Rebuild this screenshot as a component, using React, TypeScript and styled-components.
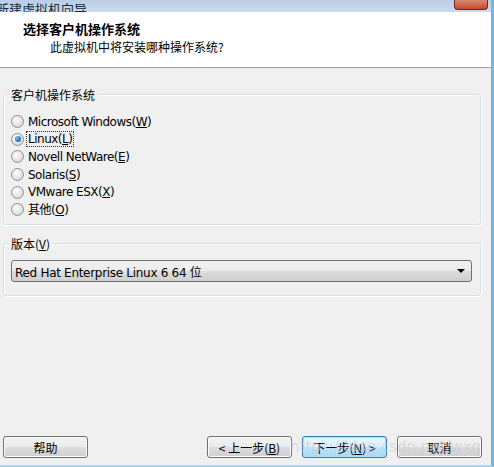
import React from 'react';
import styled, { createGlobalStyle } from 'styled-components';

const GlobalStyle = createGlobalStyle`
	html, body {
		margin: 0;
		padding: 0;
		background: #f0f0f0;
	}
	body {
		font-family: Tahoma, 'DejaVu Sans', 'Noto Sans CJK SC', sans-serif;
		font-size: 12px;
		color: #000;
	}
`;

const osList = [
	{ label: 'Microsoft Windows', key: 'W' },
	{ label: 'Linux', key: 'L' },
	{ label: 'Novell NetWare', key: 'E' },
	{ label: 'Solaris', key: 'S' },
	{ label: 'VMware ESX', key: 'X' },
	{ label: '其他', key: 'O' },
];

const App = () => {
	const selected = 'Linux';

	return (
		<Window>
			<GlobalStyle />
			<TitleBar>
				<TitleText>新建虚拟机向导</TitleText>
				<CloseBtn />
			</TitleBar>
			<Header>
				<HeaderTitle>选择客户机操作系统</HeaderTitle>
				<HeaderSub>此虚拟机中将安装哪种操作系统?</HeaderSub>
			</Header>
			<Body>
				<GroupBox $height={131}>
					<Legend>客户机操作系统</Legend>
					<RadioList>
						{osList.map((os) => (
							<RadioRow key={os.key}>
								<RadioDot $checked={os.label === selected} />
								<RadioLabel $focused={os.label === selected}>
									{os.label}(<u>{os.key}</u>)
								</RadioLabel>
							</RadioRow>
						))}
					</RadioList>
				</GroupBox>
				<GroupBox $height={53}>
					<Legend>
						版本(<u>V</u>)
					</Legend>
					<Select>
						<span>Red Hat Enterprise Linux 6 64 位</span>
						<Arrow />
					</Select>
				</GroupBox>
			</Body>
			<Footer>
				<Button>帮助</Button>
				<Spacer />
				<Button>&lt; 上一步(<u>B</u>)</Button>
				<Button $primary>
					下一步(<u>N</u>) &gt;
				</Button>
				<Button>取消</Button>
				<Watermark>https://blog.csdn.net/wxq</Watermark>
			</Footer>
		</Window>
	);
};

export default App;

const Window = styled.div`
	position: relative;
	width: 494px;
	height: 467px;
	box-sizing: border-box;
	display: flex;
	flex-direction: column;
	background: #f0f0f0;
	border-right: 3px solid #6fb7e4;
	border-bottom: 2px solid #a9d4ef;
	overflow: hidden;
`;

const TitleBar = styled.div`
	height: 12px;
	display: flex;
	align-items: flex-end;
	background: linear-gradient(#b9cde5, #c9dbef);
	overflow: hidden;
`;

const TitleText = styled.div`
	margin-left: -4px;
	font-family: 'Noto Sans CJK SC', sans-serif;
	font-size: 13px;
	line-height: 13px;
	color: #1e2a3a;
	margin-bottom: -3px;
`;

const CloseBtn = styled.div`
	margin-left: auto;
	margin-right: 3px;
	align-self: flex-start;
	width: 32px;
	height: 9px;
	border: 1px solid #6b2a1e;
	border-top: none;
	border-radius: 0 0 4px 4px;
	background: linear-gradient(#d98a72, #c4482c);
`;

const Header = styled.div`
	height: 56px;
	box-sizing: border-box;
	background: #fff;
	border-bottom: 1px solid #a0a0a0;
	padding: 8px 0 0 23px;
	font-family: 'Noto Sans CJK SC', sans-serif;
`;

const HeaderTitle = styled.div`
	font-size: 13px;
	font-weight: bold;
	line-height: 17px;
`;

const HeaderSub = styled.div`
	font-size: 12px;
	line-height: 16px;
	margin-top: 2px;
	padding-left: 27px;
`;

const Body = styled.div`
	flex: 1;
	display: flex;
	flex-direction: column;
	gap: 18px;
	padding: 26px 10px 0 3px;
`;

const GroupBox = styled.div<{ $height: number }>`
	position: relative;
	height: ${(p) => p.$height}px;
	box-sizing: border-box;
	border: 1px solid #d5dfe5;
	border-radius: 3px;
	box-shadow: inset 1px 1px 0 #fff, 1px 1px 0 #fff;
	padding: 16px 8px 0 7px;
`;

const Legend = styled.div`
	position: absolute;
	top: -9px;
	left: 5px;
	padding: 0 2px;
	background: #f0f0f0;
	font-family: 'Noto Sans CJK SC', sans-serif;
	font-size: 12px;
	line-height: 17px;
`;

const RadioList = styled.div`
	display: flex;
	flex-direction: column;
	padding-top: 2px;
`;

const RadioRow = styled.div`
	height: 17.6px;
	display: flex;
	align-items: center;
	gap: 3px;
`;

const RadioDot = styled.span<{ $checked?: boolean }>`
	width: 11px;
	height: 11px;
	border-radius: 50%;
	border: 1px solid #8e8f8f;
	background: radial-gradient(circle at 40% 35%, #ffffff, #dcdcdc 70%);
	position: relative;
	&::after {
		content: '';
		display: ${(p) => (p.$checked ? 'block' : 'none')};
		position: absolute;
		left: 2.5px;
		top: 2.5px;
		width: 6px;
		height: 6px;
		border-radius: 50%;
		background: radial-gradient(circle at 35% 35%, #7ac2ea, #1a5f96 75%);
	}
`;

const RadioLabel = styled.span<{ $focused?: boolean }>`
	font-family: Tahoma, 'DejaVu Sans', 'Noto Sans CJK SC', sans-serif;
	font-size: 12px;
	line-height: 14px;
	padding: 0 1px;
	outline: ${(p) => (p.$focused ? '1px dotted #333' : 'none')};
	letter-spacing: -0.5px;
`;

const Select = styled.div`
	height: 22px;
	box-sizing: border-box;
	margin-top: 0;
	display: flex;
	align-items: center;
	justify-content: space-between;
	padding: 0 6px 0 3px;
	border: 1px solid #707070;
	border-radius: 3px;
	background: linear-gradient(#f2f2f2 0%, #ebebeb 50%, #dddddd 51%, #cfcfcf 100%);
	font-family: Tahoma, 'DejaVu Sans', 'Noto Sans CJK SC', sans-serif;
	font-size: 12px;
	letter-spacing: -0.3px;
`;

const Arrow = styled.span`
	width: 0;
	height: 0;
	border-left: 4px solid transparent;
	border-right: 4px solid transparent;
	border-top: 4px solid #000;
`;

const Footer = styled.div`
	position: relative;
	display: flex;
	gap: 10px;
	padding: 0 9px 7px 3px;
	align-items: center;
`;

const Spacer = styled.div`
	flex: 1;
`;

const Button = styled.div<{ $primary?: boolean }>`
	width: 85px;
	height: 22px;
	box-sizing: border-box;
	display: flex;
	align-items: center;
	justify-content: center;
	border: 1px solid ${(p) => (p.$primary ? '#3c7fb1' : '#707070')};
	border-radius: 3px;
	background: ${(p) =>
		p.$primary
			? 'linear-gradient(#eaf6fd 0%, #d9f0fc 50%, #bee6fd 51%, #a7d9f5 100%)'
			: 'linear-gradient(#f2f2f2 0%, #ebebeb 50%, #dddddd 51%, #cfcfcf 100%)'};
	box-shadow: inset 0 0 0 1px ${(p) => (p.$primary ? '#a8dff7' : '#fcfcfc')};
	font-family: 'Noto Sans CJK SC', sans-serif;
	font-size: 12px;
`;

const Watermark = styled.div`
	position: absolute;
	left: 290px;
	top: 2px;
	font-family: 'DejaVu Sans', sans-serif;
	font-size: 15px;
	color: rgba(200, 200, 200, 0.55);
	pointer-events: none;
	white-space: nowrap;
`;
